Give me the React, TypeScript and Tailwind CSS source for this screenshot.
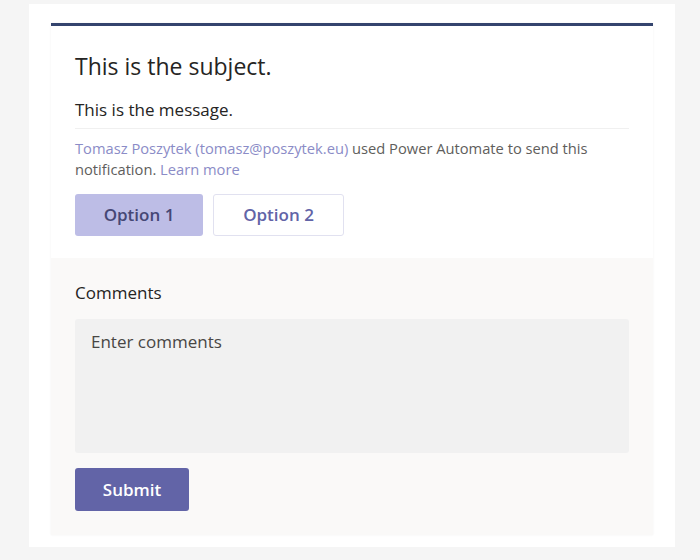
export default function App() {
  return (
    <div className="h-[560px] w-[700px] bg-[#f5f5f5] pt-[4px] pl-[29px]" style={{ fontFamily: '"Open Sans", "Noto Sans", sans-serif' }}>
      <div className="h-[543px] w-[646px] bg-white pt-[19px] pl-[22px]">
        {/* Card */}
        <div className="w-[602px] h-[512px] flex flex-col border-t-[3px] border-[#34446e] shadow-[0_0_2px_rgba(0,0,0,0.06)]">
          {/* Top section */}
          <div className="bg-white px-6 pt-[25px] h-[232px]">
            <h1 className="text-[23px] leading-[30px] text-[#252423]">This is the subject.</h1>
            <p className="mt-[18px] text-[17px] leading-[22px] text-[#252423]">This is the message.</p>
            <div className="mt-[7px] h-px bg-[#f0f0f0]" />
            <p className="mt-[9px] text-[14.7px] leading-[21px] text-[#605e5c]">
              <span className="text-[#8b8cc7]">Tomasz Poszytek (tomasz@poszytek.eu)</span> used Power Automate to send this{" "}
              <br />
              notification. <span className="text-[#8b8cc7]">Learn more</span>
            </p>
            <div className="mt-[14px] flex gap-[10px]">
              <button className="h-[42px] w-[128px] rounded-[3px] bg-[#bdbde6] text-[17px] font-semibold text-[#464775]">Option 1</button>
              <button className="h-[42px] w-[131px] rounded-[3px] border border-[#e1e1f0] bg-white text-[17px] font-semibold text-[#6264a7]">Option 2</button>
            </div>
          </div>
          {/* Bottom section */}
          <div className="flex-1 bg-[#faf9f8] px-6 pt-[24px]">
            <label className="block text-[17px] leading-[22px] text-[#252423]">Comments</label>
            <div className="mt-[15px] h-[134px] rounded-[3px] bg-[#f1f1f1] px-4 pt-[12px] text-[17px] leading-[22px] text-[#484644]">
              Enter comments
            </div>
            <button className="mt-[15px] h-[43px] w-[114px] rounded-[3px] bg-[#6264a7] text-[17px] font-semibold text-white">Submit</button>
          </div>
        </div>
      </div>
    </div>
  );
}
